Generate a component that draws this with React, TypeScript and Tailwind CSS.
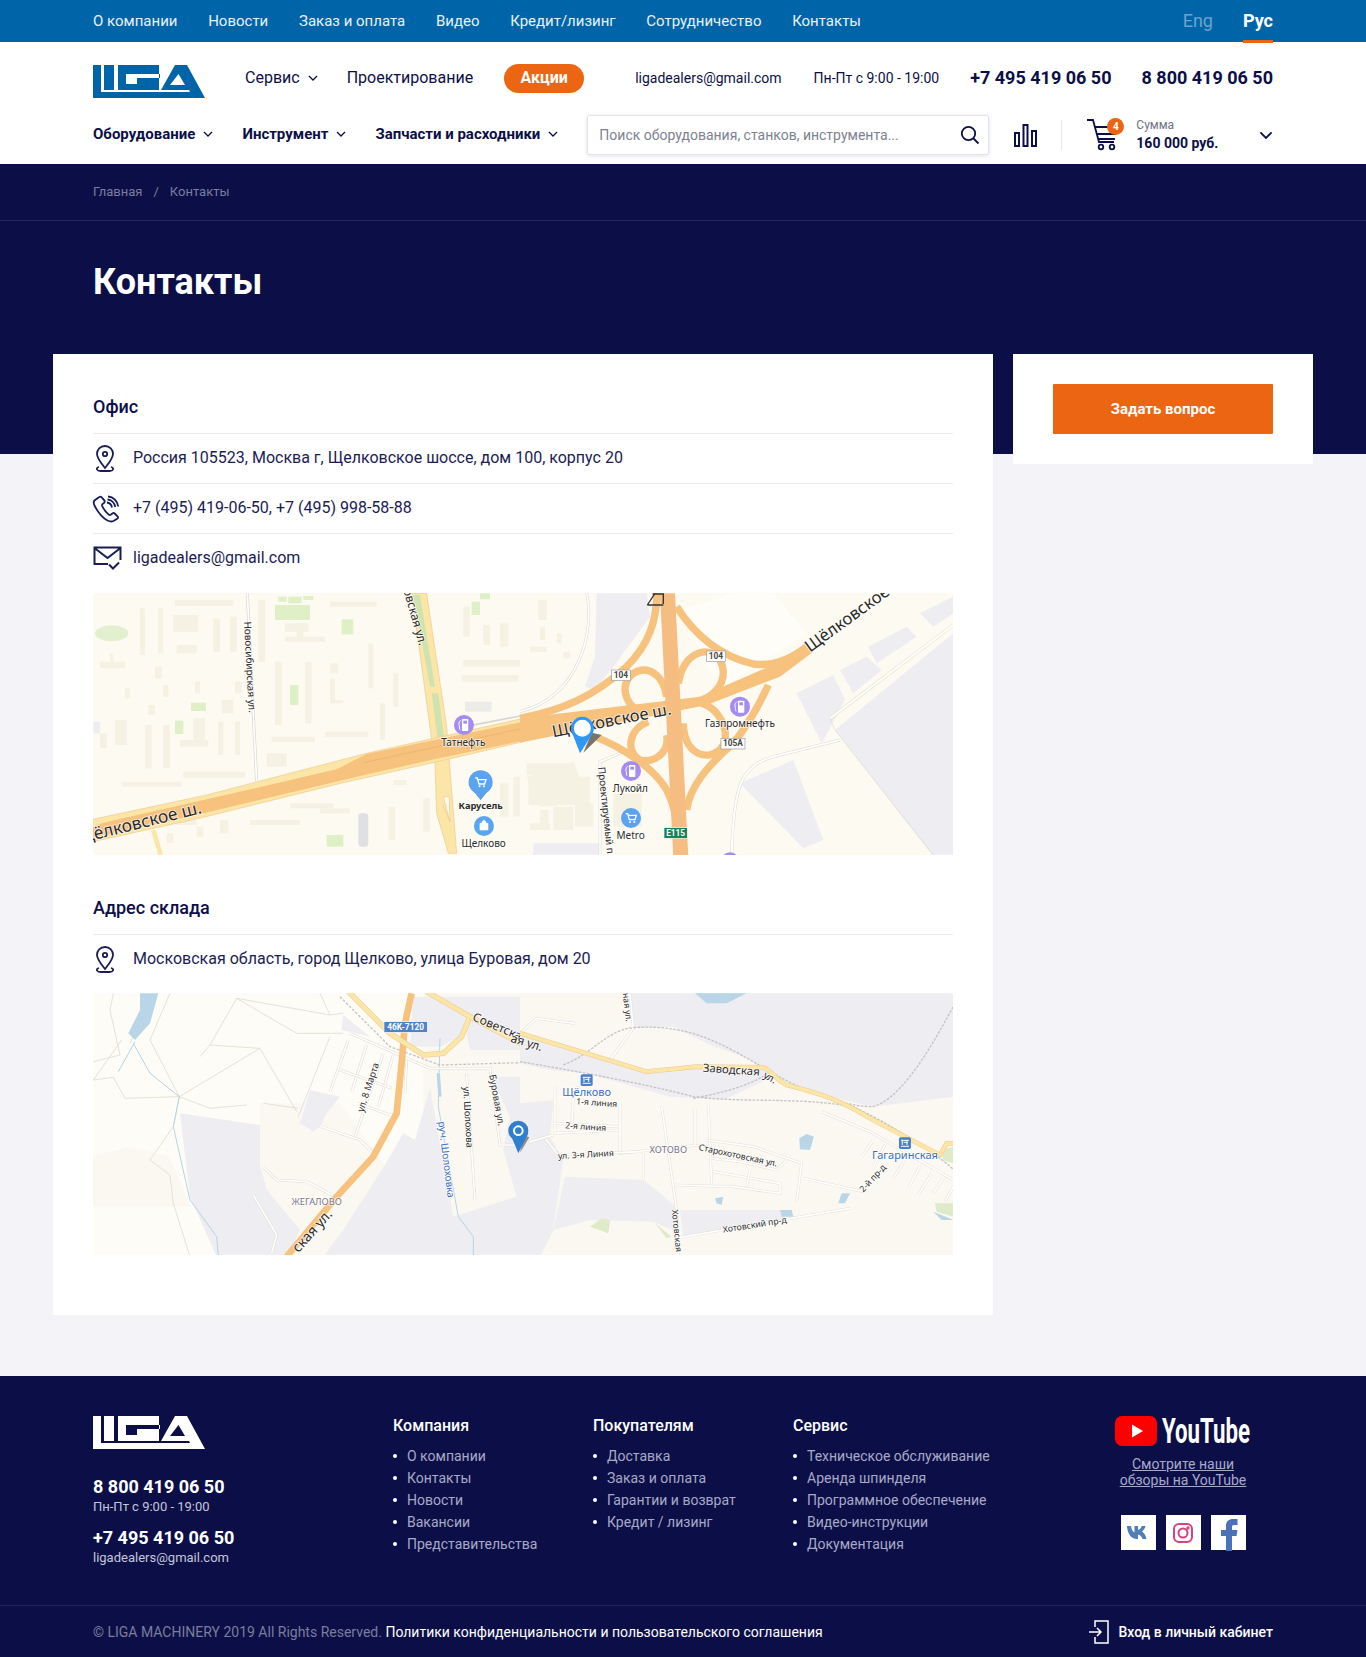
import React from 'react';

const NAVY = '#0c0f47';

const Logo = ({ color, className = '' }: { color: string; className?: string }) => (
  <svg width="112" height="33" viewBox="0 0 112 33" className={className}>
    <path fill={color} fillRule="evenodd" d="M0 0H8V27H97L96 25H68L82 0H94L112 33H0ZM77 20H92L85.5 9Z" />
    <rect x="11" y="0" width="10" height="25" fill={color} />
    <path fill={color} fillRule="evenodd" d="M25 0H66V25H25ZM33 9H67V13H44V19H33Z" />
  </svg>
);

const Chevron = ({ size = 10, className = '' }: { size?: number; className?: string }) => (
  <svg width={size} height={size * 0.6} viewBox="0 0 10 6" fill="none" className={className}>
    <path d="M1 1l4 4 4-4" stroke={NAVY} strokeWidth="1.3" />
  </svg>
);

const PinIcon = () => (
  <svg width="24" height="28" viewBox="0 0 24 28" fill="none" stroke="#1a1c55" strokeWidth="1.800">
    <path d="M12 1c-4.800 0-8 3.500-8 7.900 0 4.300 4.500 9.600 8 14.100 3.500-4.500 8-9.800 8-14.100C20 4.500 16.800 1 12 1z" />
    <circle cx="12" cy="9" r="2.200" />
    <path d="M6 22c-1.800.5-2.500 1.500-2 2.500.500 1.200 2 1.500 3.500 1.500h9c1.500 0 3-.3 3.500-1.500.5-1-.2-2-2-2.500" />
  </svg>
);

const PhoneIcon = () => (
  <svg width="28" height="28" viewBox="0 0 28 28" fill="none" stroke="#1a1c55" strokeWidth="1.800" className="-ml-[1px]">
    <path d="M6.500 2.500L2.500 5.500c-1 1-1 3 0 5 2.500 5 7.500 12 13 15 2 1 4 1.500 6 .5l4-2.500c.6-.5.6-1.300.2-2l-3-3c-.6-.6-1.400-.6-2-.2l-2 1.500c-.6.4-1.300.3-2-.2-2.500-2-5-5.500-6.500-8.500-.3-.7-.2-1.400.3-1.900l1.800-1.600c.5-.6.5-1.300.2-2l-2.800-3.300c-.6-.6-1.500-.8-2.200-.3z" />
    <path d="M15 7.500c2.500.3 4.500 2.300 5 5M15.500 4.500c4 .3 7.200 3.500 7.800 7.500M16 1.500c5.500.4 9.600 4.600 10.200 10" />
  </svg>
);

const MailIcon = () => (
  <svg width="29" height="25" viewBox="0 0 29 25" fill="none" stroke="#1a1c55" strokeWidth="2">
    <path d="M15 18H1.500V1.500h26V14M1.500 2L14.500 12 27.500 2" />
    <path d="M16 18.500l4 4 6-6" />
  </svg>
);

// road with casing
const Road = ({ d, w, c, edge }: { d: string; w: number; c: string; edge?: string }) => (
  <>
    {edge && <path d={d} fill="none" stroke={edge} strokeWidth={w + 3} />}
    <path d={d} fill="none" stroke={c} strokeWidth={w} />
  </>
);

const Label = ({ x, y, size = 30, anchor = 'middle', rot, color = '#2a2a2a', bold, children }: any) => (
  <text
    x={x}
    y={y}
    fontSize={size}
    textAnchor={anchor}
    fill={color}
    fontWeight={bold ? 700 : 400}
    stroke="#ffffff"
    strokeWidth="5"
    strokeOpacity="0.75"
    paintOrder="stroke"
    fontFamily="'Noto Sans', Roboto, sans-serif"
    transform={rot !== undefined ? `rotate(${rot} ${x} ${y})` : undefined}
  >
    {children}
  </text>
);

const Shield = ({ x, y, w, t, green }: { x: number; y: number; w: number; t: string; green?: boolean }) => (
  <g>
    <rect x={x} y={y} width={w} height="32" fill={green ? '#16835a' : '#ffffff'} stroke={green ? '#ffffff' : '#9a9a9a'} strokeWidth="2" />
    <text x={x + w / 2} y={y + 24} fontSize="25" fontWeight="700" textAnchor="middle" fill={green ? '#ffffff' : '#444444'} fontFamily="Roboto, sans-serif">
      {t}
    </text>
  </g>
);

const Fuel = ({ x, y }: { x: number; y: number }) => (
  <g>
    <circle cx={x} cy={y} r="30" fill="#a48cf2" />
    <rect x={x - 6} y={y - 18} width="19" height="36" rx="2" fill="#ffffff" />
    <rect x={x - 2} y={y - 13} width="11" height="9" fill="#a48cf2" />
    <path d={`M${x - 10} ${y - 14}c-6 6-6 10-4 16 1 5 0 10 2 12`} stroke="#ffffff" strokeWidth="3" fill="none" />
  </g>
);

const CartDot = ({ x, y, r = 30, pin }: { x: number; y: number; r?: number; pin?: boolean }) => (
  <g>
    {pin && <path d={`M${x - r} ${y + 8}L${x} ${y + r + 18}L${x + r} ${y + 8}Z`} fill="#5aa0ee" />}
    <circle cx={x} cy={y} r={r} fill="#5aa3ef" />
    <path d={`M${x - 16} ${y - 13}h6l5 18h17l4-13h-24`} fill="none" stroke="#ffffff" strokeWidth="4" />
    <circle cx={x - 3} cy={y + 12} r="3" fill="#ffffff" />
    <circle cx={x + 10} cy={y + 12} r="3" fill="#ffffff" />
  </g>
);

const b1 = [
  [150, 55, 15, 140], [205, 55, 15, 135], [255, 30, 175, 18], [370, 85, 20, 100], [420, 80, 20, 105], [505, 30, 20, 185],
  [555, 215, 20, 190], [645, 215, 20, 185], [720, 35, 140, 15], [585, 100, 70, 25], [585, 140, 120, 15], [620, 100, 20, 50],
  [30, 215, 75, 20], [60, 190, 10, 30], [260, 165, 60, 25], [195, 230, 20, 35], [105, 295, 15, 30], [220, 285, 15, 35],
  [315, 275, 15, 35], [435, 275, 20, 35], [165, 405, 20, 130], [220, 405, 20, 130], [385, 395, 15, 100], [435, 395, 15, 100],
  [30, 430, 20, 45], [75, 390, 35, 75], [270, 450, 85, 20], [310, 385, 35, 70], [835, 160, 15, 135], [910, 250, 15, 100],
  [870, 340, 15, 110], [705, 425, 130, 15], [545, 440, 130, 15], [530, 490, 60, 40], [95, 575, 180, 15], [280, 545, 185, 18],
  [600, 640, 130, 15], [690, 655, 90, 15], [480, 690, 150, 15], [390, 690, 25, 40], [720, 220, 25, 30], [720, 265, 15, 70],
  [720, 330, 40, 10], [395, 330, 35, 40], [175, 345, 20, 30], [910, 570, 40, 15], [1000, 625, 20, 100], [1230, 580, 25, 100],
  [1270, 560, 20, 120], [1120, 50, 20, 90], [1180, 105, 20, 60], [1230, 100, 25, 70], [1120, 210, 170, 20], [1115, 255, 170, 20],
  [250, 75, 75, 50], [260, 690, 60, 15], [230, 730, 20, 30], [320, 710, 20, 30], [895, 650, 20, 100],
];
const g1 = [
  [555, 45, 105, 45], [595, 20, 40, 20], [565, 20, 25, 15], [640, 18, 30, 12], [755, 88, 35, 45], [600, 285, 25, 60],
  [303, 338, 45, 25], [255, 392, 25, 40], [710, 735, 50, 35], [1170, 10, 30, 18], [1145, 35, 25, 40],
];
const b2 = [
  [55, 30, 25, 60], [30, 170, 50, 15], [60, 110, 15, 40], [130, 185, 20, 20], [20, 520, 140, 35], [25, 560, 185, 85],
  [60, 660, 25, 60], [100, 650, 60, 70], [165, 640, 55, 70], [30, 700, 60, 20], [110, 130, 15, 30], [280, 610, 85, 100],
];

const OfficeMap = () => (
  <svg viewBox="0 0 860 262" width="860" height="262" className="block">
    <defs>
      <clipPath id="m1">
        <rect width="860" height="262" />
      </clipPath>
    </defs>
    <rect width="860" height="262" fill="#fdfaf1" />
    <g clipPath="url(#m1)">
      <g transform="translate(-3 -3) scale(0.3333)">
        <ellipse cx="65" cy="130" rx="50" ry="24" fill="#e2f0cf" />
        {b1.map((r, i) => <rect key={i} x={r[0]} y={r[1]} width={r[2]} height={r[3]} fill="#f5f1e3" />)}
        {g1.map((r, i) => <rect key={i} x={r[0]} y={r[1]} width={r[2]} height={r[3]} fill="#dff0c6" />)}
        <rect x="1125" y="335" width="80" height="30" fill="#ecebe8" />
        <rect x="10" y="395" width="20" height="35" fill="#eeedf0" />
        <rect x="805" y="670" width="30" height="100" rx="10" fill="#dfe0e4" />
        <path d="M472 10L500 575" stroke="#d8d6d0" strokeWidth="9" />
        <path d="M472 10L500 575" stroke="#ffffff" strokeWidth="5" />
        <path d="M1100 415L1290 378" stroke="#d8d6d0" strokeWidth="5" />
        <path d="M965 10H1010L1070 410 1100 790H1075L1040 670 1035 520Z" fill="#fbe6a8" stroke="#efc98c" strokeWidth="2" />
        <path d="M970 15H990L1035 290H1020ZM1025 310H1045L1062 440H1042Z" fill="#cfe3b0" />
        <path d="M1060 620H1078L1080 695ZM1058 645L1080 695" fill="#fdfaf1" stroke="#efc98c" strokeWidth="2" />
        <path d="M0 690L350 615 830 490 1300 385V455L1030 518 760 578 340 682 0 757Z" fill="#fbe6a8" stroke="#efc98c" strokeWidth="2" />
        <path d="M40 698L350 628 740 538 830 492 1300 395V452L1040 506 820 556 340 670 0 745V715Z" fill="#f6c27d" />
        <path d="M820 518L1300 415" stroke="#e6b06a" strokeWidth="2" />
        <path d="M190 720L212 795" stroke="#fbe6a8" strokeWidth="14" />
        <Label x={-36} y={762} size={52} anchor="start" rot={-14}>Щёлковское ш.</Label>
        <Label x={462} y={95} size={30} anchor="start" rot={87}>Новосибирская ул.</Label>
        <Label x={940} y={0} size={36} anchor="start" rot={74}>овская ул.</Label>
        <Fuel x={1122} y={405} />
        <Label x={1120} y={467}>Татнефть</Label>
        <CartDot x={1172} y={577} r={36} pin />
        <Label x={1172} y={658} size={28} bold>Карусель</Label>
        <circle cx="1182" cy="708" r="30" fill="#5aa5f0" />
        <path d="M1170 700h24v20h-24zM1176 700c0-12 12-12 12 0" fill="#ffffff" stroke="#ffffff" strokeWidth="2" />
        <Label x={1181} y={770}>Щелково</Label>
      </g>
      <g transform="translate(427 -3) scale(0.3333)">
        <path d="M640 10L760 10 860 130 600 300 480 60Z" fill="#fffdf7" />
        <path d="M230 10H380L390 80 280 230 225 300 195 290 225 200Z" fill="#eeedf2" />
        <path d="M945 420L1300 130V800H1240Z" fill="#eeedf2" />
        <path d="M830 310L940 255 975 330 905 460Z" fill="#eeedf2" />
        <path d="M660 580L820 510 910 750 850 775Z" fill="#eeedf2" />
        <path d="M1045 170L1160 110 1190 140 1070 220ZM960 240L1040 200 1085 240 1000 310ZM1200 70L1300 20V70L1240 110Z" fill="#eeedf2" />
        <path d="M20 560L160 515 210 640 60 650ZM60 770H240V800H40Z" fill="#f5f1e3" />
        <path d="M40 760H240V800H40Z" fill="#eeedf2" />
        {b2.map((r, i) => <rect key={i} x={r[0]} y={r[1]} width={r[2]} height={r[3]} fill="#f5f1e3" />)}
        <Road d="M200 10C225 120 180 320 0 365" w={5} c="#ffffff" edge="#d8d6d0" />
        <Road d="M300 490L240 515V800" w={5} c="#ffffff" edge="#d8d6d0" />
        <Road d="M960 450L760 500C660 530 640 590 635 800" w={6} c="#ffffff" edge="#dedad0" />
        <Road d="M930 385L1300 105" w={7} c="#fffdf7" edge="#e0dccf" />
        <path d="M930 385L945 420 1240 795" stroke="#dedad0" strokeWidth="2" fill="none" />
        <g fill="none" stroke="#f6c27d" strokeWidth="22">
          <path d="M0 385C130 360 220 320 320 230 390 160 410 90 412 0" />
          <path d="M470 50C540 160 630 205 700 222 760 230 810 210 860 170" />
          <path d="M230 442C300 470 400 530 440 600 460 640 470 680 470 720" />
          <path d="M500 660C510 590 560 530 640 460 680 410 720 340 745 285" />
          <path d="M440 320C430 250 380 225 340 250 300 280 310 340 360 365 400 375 470 345 530 340" />
          <path d="M475 280C490 190 560 160 600 210 625 260 600 300 560 325" />
          <path d="M440 435C450 490 400 520 360 510 320 490 320 420 385 395" />
          <path d="M490 400C490 470 530 500 570 495 625 480 630 420 590 370 575 350 550 340 530 335" />
        </g>
        <path d="M0 385L540 320 780 215 860 170 880 185 780 260 560 345 0 458Z" fill="#f6c27d" />
        <path d="M420 10H465L505 800H460Z" fill="#f5bd82" />
        <path d="M405 10L382 45M382 45H430M398 12H430V42" fill="none" stroke="#333333" strokeWidth="4" />
        <Shield x={275} y={240} w={56} t="104" />
        <Shield x={560} y={183} w={56} t="104" />
        <Shield x={603} y={445} w={72} t="105A" />
        <Shield x={432} y={713} w={70} t="E115" green />
        <Label x={100} y={442} size={49} anchor="start" rot={-11}>Щёлковское ш.</Label>
        <Label x={870} y={188} size={50} anchor="start" rot={-36}>Щёлковское</Label>
        <Fuel x={660} y={350} />
        <Label x={660} y={410}>Газпромнефть</Label>
        <Fuel x={333} y={543} />
        <Label x={331} y={605}>Лукойл</Label>
        <CartDot x={333} y={684} />
        <Label x={332} y={746}>Metro</Label>
        <Label x={234} y={532} anchor="start" rot={84}>Проектируемый п</Label>
        <circle cx="630" cy="815" r="28" fill="#a48cf2" />
        <path d="M190 488L245 435 215 428Z" fill="#77746c" />
        <path d="M157 430L180 490 218 430Z" fill="#2f97f5" />
        <circle cx="187" cy="415" r="30" fill="#ffffff" stroke="#2f97f5" strokeWidth="9" />
      </g>
    </g>
  </svg>
);

const streets = [
  'M780 130L1020 235H1200L1230 465H1290',
  'M775 150L720 305', 'M830 165L785 305', 'M880 190L795 440', 'M910 195L865 350',
  'M750 240L905 295', 'M805 340L900 375', 'M695 410L810 450 850 490',
  'M520 530L560 570 650 575 745 625', 'M490 615L560 735 545 790',
  'M1130 250L1155 630', 'M950 210L945 310',
];
const paths2 = [
  'M10 215L90 195 60 60 70 10', 'M10 270L70 262 105 325 210 322 268 320 360 355 470 345',
  'M268 320L180 150 240 10', 'M268 320L510 175 620 365', 'M510 175L360 165 330 200', 'M360 165L440 25 620 130 760 130',
  'M440 25L720 75 760 70', 'M268 320L250 410 180 510 240 555 250 640 300 800', 'M720 75L690 10',
  'M625 380L720 140', 'M520 340L625 355', 'M120 160L180 30', 'M95 150L10 270',
];
const hotovo = [
  'M0 130L50 85 165 100',
  'M105 290V420', 'M160 320L155 410', 'M105 400L300 410', 'M100 430L300 420', 'M300 340V490L540 465',
  'M75 445L115 495 360 485', 'M370 490V565', 'M425 350L470 660 475 800',
  'M525 355V465', 'M565 345L575 580', 'M575 505L660 515 770 540 800 510 790 490', 'M580 545L780 580V610L640 590 465 585', 'M690 540L680 590',
  'M560 450L700 470 845 520 830 635', 'M850 565L1030 605', 'M905 365L1050 425 1300 570',
  'M1060 450L1025 500', 'M1095 465L1060 530', 'M1160 500L1120 565', 'M1200 530L1165 595', 'M1235 550L1195 615', 'M1270 565L1240 610', 'M1300 590L1275 635',
  'M480 742L990 655', 'M270 210L340 115 330 10', 'M30 455L100 435',
];

const WarehouseMap = () => (
  <svg viewBox="0 0 860 262" width="860" height="262" className="block">
    <defs>
      <clipPath id="m2">
        <rect width="860" height="262" />
      </clipPath>
    </defs>
    <rect width="860" height="262" fill="#fefcf6" />
    <g clipPath="url(#m2)">
      <g transform="translate(-3 -3) scale(0.3333)">
        <path d="M0 500L120 470 240 500 300 650H0Z" fill="#fbf8f1" />
        <path d="M510 340H750L880 520 940 800H510Z" fill="#fbf8f1" />
        <rect x="1000" y="10" width="300" height="800" fill="#fbf8f1" />
        <path d="M270 370L510 405V525L530 600 630 720 590 800H380L300 620Z" fill="#eeedf2" />
        <path d="M630 400L660 300 750 320 710 370 690 410 670 425Z" fill="#eeedf2" />
        <path d="M885 525L940 430 975 450 1020 295 1090 680 1130 800H700L760 720Z" fill="#eeedf2" />
        <path d="M970 20H1290V180L1140 180 1130 130 1050 170 960 170Z" fill="#eeedf2" />
        <path d="M1205 260H1300V800H1120L1090 680 1280 620 1240 480 1260 380Z" fill="#eeedf2" />
        <path d="M760 75L840 140 800 130 755 120Z" fill="#eeedf2" />
        {paths2.map((d, i) => <path key={i} d={d} fill="none" stroke="#e0dcd0" strokeWidth="2.500" />)}
        <path d="M150 10H205L180 100 135 150 115 130 150 60Z" fill="#b9d6e8" />
        <path d="M135 155L85 245M130 160L180 250 268 320 250 410 300 630 380 740 385 800M1050 145L1045 350 1105 680 1150 740V800" fill="none" stroke="#b4d4e8" strokeWidth="3" />
        <path d="M1040 250L1045 320 1055 320 1050 250Z" fill="#b9d6e8" />
        {streets.map((d, i) => <Road key={i} d={d} w={5} c="#ffffff" edge="#dfdbd0" />)}
        <path d="M750 20L900 170 1050 225 1290 218" fill="none" stroke="#c4c4c4" strokeWidth="4" strokeDasharray="8 5" />
        <Road d="M965 10L945 100 935 220 920 370 850 500 740 620 590 800" w={20} c="#f6c27d" />
        <Road d="M775 5L900 130 1000 195 1060 190 1115 140 1140 80 1010 5" w={13} c="#fbe6a8" edge="#efc98c" />
        <Road d="M1140 80L1300 165" w={13} c="#fbe6a8" edge="#efc98c" />
        <rect x="882" y="95" width="130" height="32" fill="#4d83c9" stroke="#ffffff" strokeWidth="2" />
        <text x="947" y="120" fontSize="25" fontWeight="700" fill="#ffffff" textAnchor="middle" fontFamily="Roboto, sans-serif">46K-7120</text>
        <Label x={1145} y={90} size={36} anchor="start" rot={23}>Советская ул.</Label>
        <Label x={820} y={368} size={28} anchor="start" rot={-72}>ул. 8 Марта</Label>
        <Label x={1120} y={290} size={28} anchor="start" rot={87}>ул. Шолохова</Label>
        <Label x={1198} y={255} size={28} anchor="start" rot={80}>Буровая ул.</Label>
        <Label x={1045} y={395} size={30} anchor="start" rot={83} color="#3a6fbf">руч. Шолоховка</Label>
        <Label x={680} y={645} size={28} color="#77758c">ЖЕГАЛОВО</Label>
        <Label x={625} y={790} size={42} anchor="start" rot={-48}>ская ул.</Label>
      </g>
      <g transform="translate(427 -3) scale(0.3333)">
        <rect x="0" y="0" width="1300" height="810" fill="#fbf8f1" />
        <path d="M330 10H1300V320L1060 350 930 320 760 260 680 205 560 160 460 110 340 115Z" fill="#eeedf2" />
        <path d="M0 130L180 180 380 245 560 230 740 230 760 260 610 330 450 320 200 250 90 240 0 220Z" fill="#eeedf2" />
        <path d="M0 340L100 330 90 440 130 510 100 720 60 800H0Z" fill="#eeedf2" />
        <path d="M135 560L370 570 470 650 480 730 400 695 210 690 100 720Z" fill="#eeedf2" />
        <path d="M480 660L780 660 800 690 490 740Z" fill="#eeedf2" />
        <path d="M525 10H680L620 40H560Z" fill="#b9d6e8" />
        <path d="M838 445L860 432 882 440 870 480 840 478Z" fill="#b9d6e8" />
        <path d="M955 640L965 610H990L975 640ZM585 625L610 620 605 645 590 640ZM780 660H815L820 680H785ZM1240 665L1300 690H1265Z" fill="#b9d6e8" />
        <path d="M210 710L245 685 270 690 265 730ZM405 700L455 740 440 745ZM1245 640L1300 640V680L1250 665ZM1265 480L1300 470V520L1270 510Z" fill="#dfeac8" />
        {hotovo.map((d, i) => <Road key={i} d={d} w={5} c="#ffffff" edge="#e3dfd3" />)}
        <path d="M0 215C150 240 370 280 520 320 700 340 820 320 1000 350 1150 420 1300 530 1300 540" fill="none" stroke="#c4c4c4" strokeWidth="4" strokeDasharray="8 4" />
        <path d="M130 225C220 190 260 120 340 113 520 100 620 170 760 250 900 330 1000 350 1060 350 1160 320 1260 120 1300 50" fill="none" stroke="#c4c4c4" strokeWidth="4" strokeDasharray="8 4" />
        <path d="M520 325C600 310 680 290 730 258" fill="none" stroke="#c4c4c4" strokeWidth="4" strokeDasharray="8 4" />
        <Road d="M0 130L380 245 530 230 730 232C760 245 760 265 800 285 900 310 960 330 1050 385L1260 495 1280 460H1300" w={11} c="#fbe6a8" edge="#efc98c" />
        <Label x={-30} y={155} size={36} anchor="start" rot={17}>ая ул.</Label>
        <Label x={548} y={245} size={34} anchor="start" rot={4}>Заводская</Label>
        <Label x={728} y={262} size={30} anchor="start" rot={30}>ул.</Label>
        <Label x={308} y={10} size={26} anchor="start" rot={83}>ная ул.</Label>
        <rect x="182" y="253" width="36" height="35" rx="5" fill="#4a7fc9" />
        <path d="M188 262h24M192 262v14M206 262v14M188 280h24M196 268h12" stroke="#ffffff" strokeWidth="3" />
        <Label x={200} y={318} size={33} color="#3a6fbf">Щёлково</Label>
        <Label x={168} y={343} size={26} anchor="start" rot={4}>1-я линия</Label>
        <Label x={135} y={415} size={26} anchor="start" rot={4}>2-я линия</Label>
        <Label x={115} y={507} size={26} anchor="start" rot={-3}>ул. 3-я Линия</Label>
        <Label x={445} y={488} size={28} color="#77758c">ХОТОВО</Label>
        <Label x={535} y={480} size={26} anchor="start" rot={12}>Старохотовская ул.</Label>
        <Label x={1030} y={608} size={26} anchor="start" rot={-47}>2-й пр-д</Label>
        <Label x={610} y={728} size={26} anchor="start" rot={-9}>Хотовский пр-д</Label>
        <Label x={455} y={660} size={26} anchor="start" rot={84}>Хотовская</Label>
        <rect x="1137" y="442" width="36" height="35" rx="5" fill="#4a7fc9" />
        <path d="M1143 451h24M1147 451v14M1161 451v14M1143 469h24M1151 457h12" stroke="#ffffff" strokeWidth="3" />
        <Label x={1155} y={506} size={33} color="#3a6fbf">Гагаринская</Label>
        <path d="M0 488L28 442 12 436Z" fill="#8f8e8a" />
        <path d="M-30 430L-5 490 25 430Z" fill="#2f7fce" />
        <circle cx="-5" cy="422" r="23" fill="#ffffff" stroke="#2f7fce" strokeWidth="14" />
        <circle cx="-5" cy="422" r="10" fill="#2f7fce" />
      </g>
    </g>
  </svg>
);

const ContactRow = ({ icon, text }: { icon: React.ReactNode; text: string }) => (
  <div className="flex h-[50px] items-center border-t border-[#ebebef]">
    <div className="flex w-[40px] shrink-0 items-center">{icon}</div>
    <span className="pb-px text-base text-[#1a1c55]">{text}</span>
  </div>
);

const FooterCol = ({ title, items, width }: { title: string; items: string[]; width: string }) => (
  <div className={width}>
    <div className="text-base leading-[20px] font-medium text-white">{title}</div>
    <ul className="mt-[9px]">
      {items.map((item) => (
        <li key={item} className="flex h-[22px] items-center text-sm text-[#a8a9c6]">
          <span className="mr-[10px] h-[4px] w-[4px] rounded-full bg-white" />
          {item}
        </li>
      ))}
    </ul>
  </div>
);

export default function App() {
  return (
    <div className="min-h-[1657px] bg-[#f3f3f8] font-['Roboto',sans-serif] text-[#0c0f47]">
      {/* Top bar */}
      <div className="flex h-[42px] items-center justify-between bg-[#0065a8] px-[93px]">
        <nav className="flex gap-[30.700px] text-[15px] text-[#e8f1f8]">
          {['О компании', 'Новости', 'Заказ и оплата', 'Видео', 'Кредит/лизинг', 'Сотрудничество', 'Контакты'].map((t) => (
            <span key={t}>{t}</span>
          ))}
        </nav>
        <div className="flex h-full items-center gap-[30px] text-lg">
          <span className="text-[#6fa3cb]">Eng</span>
          <span className="relative flex h-full items-center font-bold text-white">
            Рус
            <span className="absolute right-0 -bottom-px left-0 h-[3px] bg-[#ec6512]" />
          </span>
        </div>
      </div>

      {/* Header */}
      <header className="h-[122px] bg-white px-[93px]">
        <div className="flex h-[72px] items-center">
          <Logo color="#0065a8" className="mt-[7px]" />
          <span className="ml-10 flex items-center text-base">
            Сервис
            <Chevron className="ml-2" />
          </span>
          <span className="ml-[29px] text-base">Проектирование</span>
          <span className="ml-[31px] flex h-[29px] w-[80px] items-center justify-center rounded-full bg-[#ec6512] text-base font-bold text-white">
            Акции
          </span>
          <span className="ml-[51px] text-sm">ligadealers@gmail.com</span>
          <span className="ml-[32px] text-sm">Пн-Пт с 9:00 - 19:00</span>
          <span className="ml-auto text-lg font-bold">+7 495 419 06 50</span>
          <span className="ml-[30px] text-lg font-bold">8 800 419 06 50</span>
        </div>
        <div className="flex h-[42px] items-center">
          <span className="flex items-center pb-[2px] text-[15px] font-bold">
            Оборудование
            <Chevron className="ml-2" />
          </span>
          <span className="ml-[29px] flex items-center pb-[2px] text-[15px] font-bold">
            Инструмент
            <Chevron className="ml-2" />
          </span>
          <span className="ml-[29px] flex items-center pb-[2px] text-[15px] font-bold">
            Запчасти и расходники
            <Chevron className="ml-2" />
          </span>
          <div className="ml-[29px] flex h-[40px] w-[402px] items-center justify-between rounded-[2px] border border-[#e3e3ee] bg-white pr-[8px] pl-[11px] shadow-[0_1px_4px_rgba(12,15,71,0.12)]">
            <span className="text-sm text-[#7d8290]">Поиск оборудования, станков, инструмента...</span>
            <svg width="20" height="20" viewBox="0 0 20 20" fill="none" stroke={NAVY} strokeWidth="1.800">
              <circle cx="8.500" cy="8.500" r="6.700" />
              <path d="M13.500 13.500L18.500 18.500" />
            </svg>
          </div>
          <svg width="23" height="23" viewBox="0 0 23 23" fill="none" stroke={NAVY} strokeWidth="2" className="ml-[25px]">
            <path d="M1 9h4v13H1zM9.500 1h4v21h-4zM18 7h4v15h-4z" />
          </svg>
          <div className="ml-[24px] h-[30px] w-px bg-[#e6e6ec]" />
          <div className="relative ml-[25px] h-[32px] w-[33px]">
            <svg width="33" height="32" viewBox="0 0 33 32" fill="none" stroke={NAVY} strokeWidth="1.800">
              <path d="M0 1h6l6 22h15M8 8h23M10 15h19M11 20h17" />
              <circle cx="14" cy="28" r="2.300" />
              <circle cx="25" cy="28" r="2.300" />
            </svg>
            <span className="absolute -top-[1px] right-[-4px] flex h-[17px] w-[17px] items-center justify-center rounded-full bg-[#ec6512] text-[10px] font-bold text-white">4</span>
          </div>
          <div className="ml-[16px] flex flex-col">
            <span className="text-xs leading-[16px] text-[#6d7186]">Сумма</span>
            <span className="text-sm leading-[20px] font-bold">160 000 руб.</span>
          </div>
          <Chevron size={14} className="ml-auto" />
        </div>
      </header>

      {/* Title band */}
      <div className="h-[290px] bg-[#0c0f47]">
        <div className="flex h-[57px] items-center gap-[11px] border-b border-[#23265c] px-[93px] text-[13px] text-[#7b7d9c]">
          <span>Главная</span>
          <span>/</span>
          <span>Контакты</span>
        </div>
        <h1 className="mt-[36px] px-[93px] text-[36px] leading-[50px] font-bold text-white">Контакты</h1>
      </div>

      {/* Content */}
      <main className="-mt-[100px] flex items-start gap-5 px-[53px] pb-[61px]">
        <section className="w-[940px] bg-white px-10 pt-[36px] pb-[60px]">
          <h2 className="mb-[9px] text-lg leading-[34px] font-medium">Офис</h2>
          <ContactRow icon={<PinIcon />} text="Россия 105523, Москва г, Щелковское шоссе, дом 100, корпус 20" />
          <ContactRow icon={<PhoneIcon />} text="+7 (495) 419-06-50, +7 (495) 998-58-88" />
          <ContactRow icon={<MailIcon />} text="ligadealers@gmail.com" />
          <div className="mt-[10px]">
            <OfficeMap />
          </div>
          <h2 className="mt-[36px] mb-[9px] text-lg leading-[34px] font-medium">Адрес склада</h2>
          <ContactRow icon={<PinIcon />} text="Московская область, город Щелково, улица Буровая, дом 20" />
          <div className="mt-[9px]">
            <WarehouseMap />
          </div>
        </section>
        <aside className="w-[300px] bg-white px-10 pt-[30px] pb-[30px]">
          <button className="h-[50px] w-full rounded-[1px] bg-[#ec6512] text-[15px] font-bold text-white">Задать вопрос</button>
        </aside>
      </main>

      {/* Footer */}
      <footer className="h-[281px] bg-[#0c0f47]">
        <div className="flex h-[230px] border-b border-[#23265c] px-[93px] pt-[40px]">
          <div className="w-[300px]">
            <Logo color="#ffffff" />
            <div className="mt-[26px] text-lg leading-[24px] font-bold text-white">8 800 419 06 50</div>
            <div className="text-[13px] leading-[16px] text-[#c5c6da]">Пн-Пт с 9:00 - 19:00</div>
            <div className="mt-[11px] text-lg leading-[24px] font-bold text-white">+7 495 419 06 50</div>
            <div className="text-[13px] leading-[16px] text-[#c5c6da]">ligadealers@gmail.com</div>
          </div>
          <FooterCol width="w-[200px]" title="Компания" items={['О компании', 'Контакты', 'Новости', 'Вакансии', 'Представительства']} />
          <FooterCol width="w-[200px]" title="Покупателям" items={['Доставка', 'Заказ и оплата', 'Гарантии и возврат', 'Кредит / лизинг']} />
          <FooterCol width="w-[280px]" title="Сервис" items={['Техническое обслуживание', 'Аренда шпинделя', 'Программное обеспечение', 'Видео-инструкции', 'Документация']} />
          <div className="flex flex-1 flex-col items-end pr-[10px]">
            <div className="flex w-[160px] flex-col items-center">
              <svg width="136" height="30" viewBox="0 0 136 30">
                <rect x="0" y="0" width="42" height="30" rx="7" fill="#ff0000" />
                <path d="M17 8.500L28 15 17 21.500Z" fill="#ffffff" />
                <text x="47" y="27" fontSize="35" fontWeight="700" fill="#ffffff" fontFamily="Roboto, sans-serif" textLength="88" lengthAdjust="spacingAndGlyphs">YouTube</text>
              </svg>
              <div className="mt-[10px] text-center text-sm leading-[16px] text-[#a8a9c6] underline">
                Смотрите наши
                <br />
                обзоры на YouTube
              </div>
              <div className="mt-[27px] flex gap-[10px]">
                <div className="flex h-[35px] w-[35px] items-center justify-center bg-white">
                  <svg width="22" height="13" viewBox="0 0 22 13" fill="#4f7fb5">
                    <path d="M0 0h4c.6 3.500 2 6 3.500 6.500V0h3.500v4c1.500-.2 3-2 3.800-4H18.500c-.5 2.500-2 4.500-3.500 5.500 1.700.9 3.500 3 4.500 7.500h-4c-.7-2.500-2.300-4.300-4.500-4.500v4.500h-1C5 13 .5 9 0 0z" />
                  </svg>
                </div>
                <div className="flex h-[35px] w-[35px] items-center justify-center bg-white">
                  <svg width="20" height="20" viewBox="0 0 20 20" fill="none" stroke="#d6417f" strokeWidth="2">
                    <rect x="1" y="1" width="18" height="18" rx="5" />
                    <circle cx="10" cy="10" r="4.500" />
                    <circle cx="15" cy="5" r="0.700" fill="#d6417f" />
                  </svg>
                </div>
                <div className="flex h-[35px] w-[35px] items-end justify-center overflow-visible bg-white">
                  <svg width="17" height="32" viewBox="0 0 17 32" fill="#4a72b8" className="-mb-[1px] ml-[2px]">
                    <path d="M5 32V17H0v-6h5V7c0-5 3-7 7-7h4.500v6H13c-1.500 0-2 .8-2 2v3h5.500l-1 6H11v15z" />
                  </svg>
                </div>
              </div>
            </div>
          </div>
        </div>
        <div className="flex h-[50px] items-center justify-between px-[93px] pt-px text-sm">
          <div>
            <span className="text-[#7b7d9c]">© LIGA MACHINERY 2019 All Rights Reserved. </span>
            <span className="text-white">Политики конфиденциальности и пользовательского соглашения</span>
          </div>
          <div className="flex items-center gap-[9px] font-medium text-white">
            <svg width="20" height="24" viewBox="0 0 20 24" fill="none" stroke="#ffffff" strokeWidth="1.500">
              <path d="M6 7V1h13v22H6v-6M0 12h12M8 8l4 4-4 4" />
            </svg>
            Вход в личный кабинет
          </div>
        </div>
      </footer>
    </div>
  );
}
